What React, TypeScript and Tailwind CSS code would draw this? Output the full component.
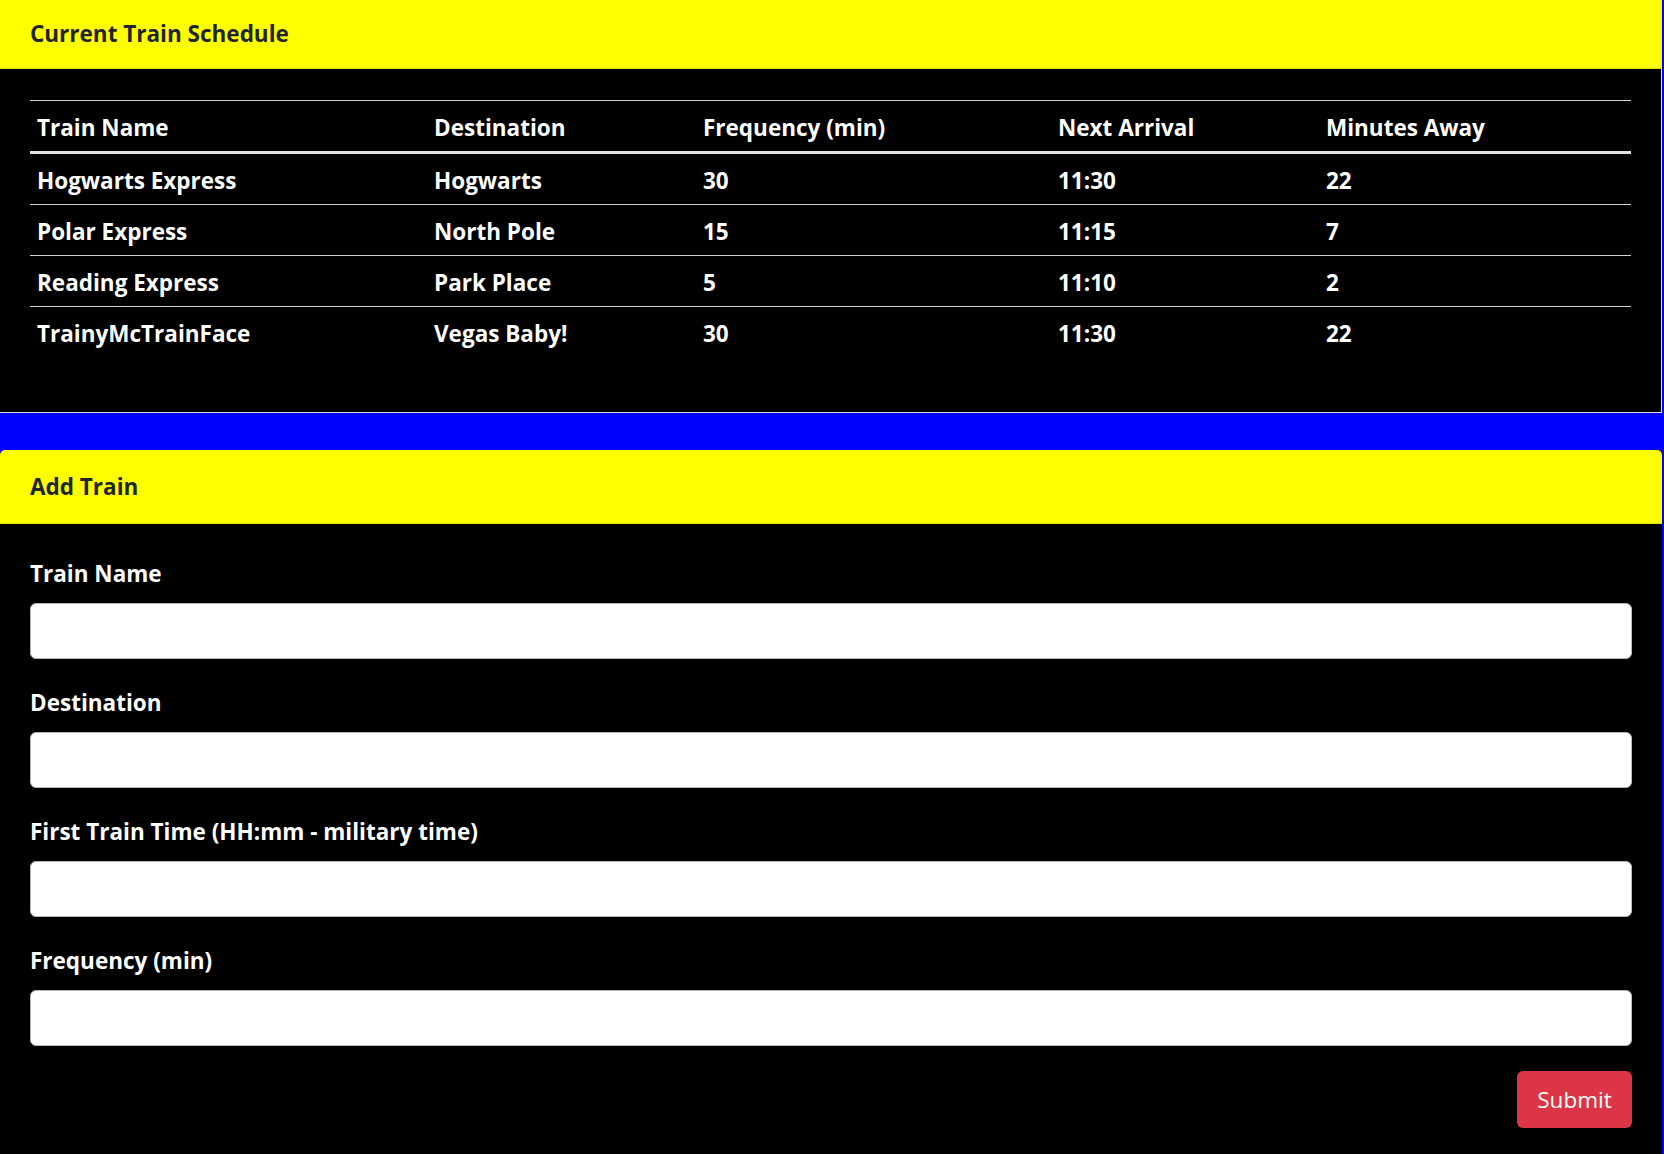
const trains = [
  { name: "Hogwarts Express", dest: "Hogwarts", freq: "30", next: "11:30", away: "22" },
  { name: "Polar Express", dest: "North Pole", freq: "15", next: "11:15", away: "7" },
  { name: "Reading Express", dest: "Park Place", freq: "5", next: "11:10", away: "2" },
  { name: "TrainyMcTrainFace", dest: "Vegas Baby!", freq: "30", next: "11:30", away: "22" },
];

const cols = "grid grid-cols-[397px_269px_355px_268px_313px]";
const fields = ["Train Name", "Destination", "First Train Time (HH:mm - military time)", "Frequency (min)"];

export default function App() {
  return (
    <div className="min-h-screen bg-[#0000ff] font-['Open_Sans',sans-serif]">
      {/* schedule card */}
      <div className="w-[1662px] border-r border-b border-[#d8d8d8] bg-black">
        <div className="flex h-[69px] items-center border-b border-[#e0e000] bg-[#ffff00] px-[30px]">
          <h5 className="text-[22.5px] font-bold text-[#212529]">Current Train Schedule</h5>
        </div>
        <div className="px-[30px] pt-[31px] pb-[54px]">
          <div className="border-t border-[#d0d0d0] text-[22.5px] font-bold text-white">
            <div className={`${cols} h-[53px] items-center border-b-[3px] border-[#dee2e6] pt-[4px]`}>
              <div className="pl-[7px]">Train Name</div>
              <div className="pl-[7px]">Destination</div>
              <div className="pl-[7px]">Frequency (min)</div>
              <div className="pl-[7px]">Next Arrival</div>
              <div className="pl-[7px]">Minutes Away</div>
            </div>
            {trains.map((t, i) => (
              <div
                key={t.name}
                className={`${cols} h-[51px] items-center pt-[3px] ${i < trains.length - 1 ? "border-b border-[#d0d0d0]" : ""}`}
              >
                <div className="pl-[7px]">{t.name}</div>
                <div className="pl-[7px]">{t.dest}</div>
                <div className="pl-[7px]">{t.freq}</div>
                <div className="pl-[7px]">{t.next}</div>
                <div className="pl-[7px]">{t.away}</div>
              </div>
            ))}
          </div>
        </div>
      </div>

      {/* add train card */}
      <div className="mt-[37px] w-[1662px] rounded-t-[5px] bg-black">
        <div className="flex h-[74px] items-center rounded-t-[5px] border-b border-[#e0e000] bg-[#ffff00] px-[30px]">
          <h5 className="text-[22.5px] font-bold text-[#212529]">Add Train</h5>
        </div>
        <form className="px-[30px] pt-[35px] pb-[40px]" onSubmit={(e) => e.preventDefault()}>
          {fields.map((f) => (
            <div key={f} className="mb-[29px]">
              <label className="mb-[14px] block h-[30px] text-[22.5px] leading-[30px] font-bold text-white">{f}</label>
              <input
                type="text"
                className="block h-[56px] w-full rounded-[6px] border-[1.5px] border-[#b4b8bc] bg-white px-3 text-[20px]"
              />
            </div>
          ))}
          <div className="-mt-[4px] flex justify-end">
            <button
              type="submit"
              className="h-[57px] w-[115px] rounded-[6px] bg-[#dc3545] text-[22.5px] text-white"
            >
              Submit
            </button>
          </div>
        </form>
      </div>
    </div>
  );
}
